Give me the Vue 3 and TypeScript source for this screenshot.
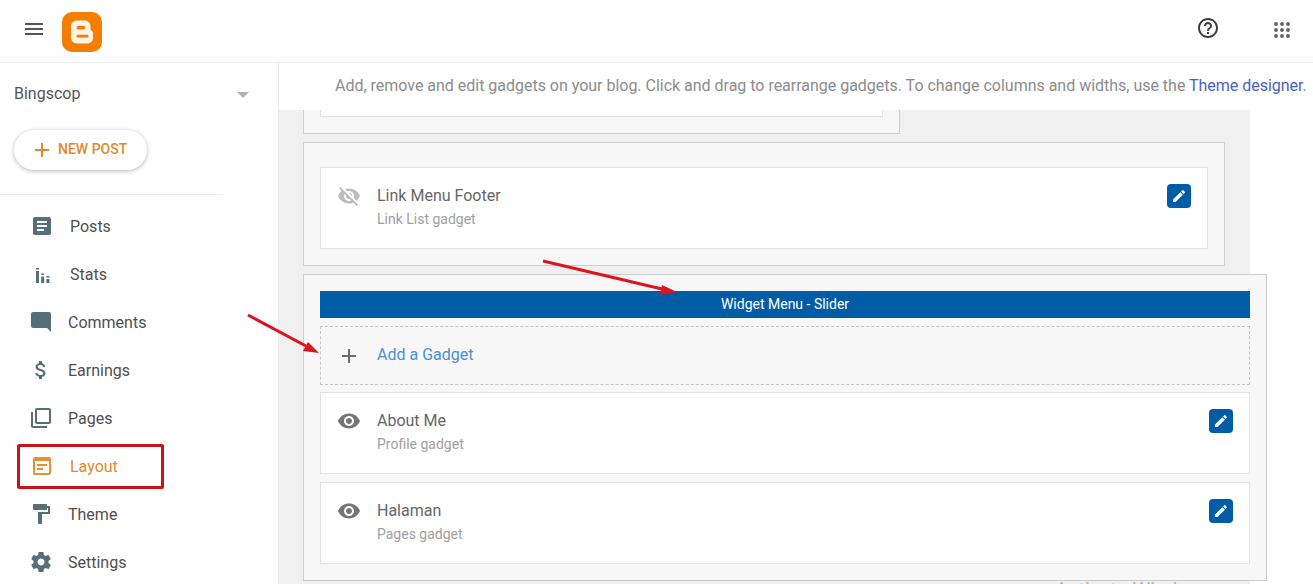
<script setup lang="ts">
interface NavItem {
  label: string
  icon: string
  alt?: boolean
  active?: boolean
}

const eye =
  'M12 4.5C7 4.5 2.73 7.61 1 12c1.73 4.39 6 7.5 11 7.5s9.27-3.11 11-7.5c-1.73-4.39-6-7.5-11-7.5zM12 17c-2.76 0-5-2.24-5-5s2.24-5 5-5 5 2.24 5 5-2.24 5-5 5zm0-8c-1.66 0-3 1.34-3 3s1.34 3 3 3 3-1.34 3-3-1.34-3-3-3z'
const eyeOff =
  'M12 7c2.76 0 5 2.24 5 5 0 .65-.13 1.26-.36 1.83l2.92 2.92c1.51-1.26 2.7-2.89 3.43-4.75-1.73-4.39-6-7.5-11-7.5-1.4 0-2.74.25-3.98.7l2.16 2.16C10.74 7.13 11.35 7 12 7zM2 4.27l2.28 2.28.46.46C3.08 8.3 1.78 10.02 1 12c1.73 4.39 6 7.5 11 7.5 1.55 0 3.03-.3 4.38-.84l.42.42L19.73 22 21 20.73 3.27 3 2 4.27zM7.53 9.8l1.55 1.55c-.05.21-.08.43-.08.65 0 1.66 1.34 3 3 3 .22 0 .44-.03.65-.08l1.55 1.55c-.67.33-1.41.53-2.2.53-2.76 0-5-2.24-5-5 0-.79.2-1.53.53-2.2zm4.31-.78l3.15 3.15.02-.16c0-1.66-1.34-3-3-3l-.17.01z'
const pencil =
  'M3 17.25V21h3.75L17.81 9.94l-3.75-3.75L3 17.25zM20.71 7.04c.39-.39.39-1.02 0-1.41l-2.34-2.34c-.39-.39-1.02-.39-1.41 0l-1.83 1.83 3.75 3.75 1.83-1.83z'

const navItems: NavItem[] = [
  {
    label: 'Posts',
    icon: 'M19 3H5c-1.1 0-2 .9-2 2v14c0 1.1.9 2 2 2h14c1.1 0 2-.9 2-2V5c0-1.1-.9-2-2-2zm-5 14H7v-2h7v2zm3-4H7v-2h10v2zm0-4H7V7h10v2z',
  },
  {
    label: 'Stats',
    icon: 'M6 6h3v1.6H6zM6 9h3v12H6zM11.2 11.5h3v1.5h-3zM11.2 14.4h3V21h-3zM16.4 14h3v1.5h-3zM16.4 17h3v4h-3z',
  },
  {
    label: 'Comments',
    alt: true,
    icon: 'M21.99 4c0-1.1-.89-2-1.99-2H4c-1.1 0-2 .9-2 2v12c0 1.1.9 2 2 2h14l4 4-.01-18z',
  },
  {
    label: 'Earnings',
    alt: true,
    icon: 'M11.8 10.9c-2.27-.59-3-1.2-3-2.15 0-1.09 1.01-1.85 2.7-1.85 1.78 0 2.44.85 2.5 2.1h2.21c-.07-1.72-1.12-3.3-3.21-3.81V3h-3v2.16c-1.94.42-3.5 1.68-3.5 3.61 0 2.31 1.91 3.46 4.7 4.13 2.5.6 3 1.48 3 2.41 0 .69-.49 1.79-2.7 1.79-2.06 0-2.87-.92-2.98-2.1h-2.2c.12 2.19 1.76 3.42 3.68 3.83V21h3v-2.15c1.95-.37 3.5-1.5 3.5-3.55 0-2.84-2.43-3.81-4.7-4.4z',
  },
  {
    label: 'Pages',
    alt: true,
    icon: 'M4 6H2v14c0 1.1.9 2 2 2h14v-2H4V6zm16-4H8c-1.1 0-2 .9-2 2v12c0 1.1.9 2 2 2h12c1.1 0 2-.9 2-2V4c0-1.1-.9-2-2-2zm0 14H8V4h12v12z',
  },
  {
    label: 'Layout',
    active: true,
    icon: 'M19 3H5c-1.1 0-2 .9-2 2v14c0 1.1.9 2 2 2h14c1.1 0 2-.9 2-2V5c0-1.1-.9-2-2-2zm0 16H5V7h14v12zM7 10h10v2H7zm0 4h6v2H7z',
  },
  {
    label: 'Theme',
    alt: true,
    icon: 'M18 4V3c0-.55-.45-1-1-1H5c-.55 0-1 .45-1 1v4c0 .55.45 1 1 1h12c.55 0 1-.45 1-1V6h1v4H9v11c0 .55.45 1 1 1h2c.55 0 1-.45 1-1v-9h8V4h-3z',
  },
  {
    label: 'Settings',
    alt: true,
    icon: 'M19.43 12.98c.04-.32.07-.64.07-.98s-.03-.66-.07-.98l2.11-1.65c.19-.15.24-.42.12-.64l-2-3.46c-.12-.22-.39-.3-.61-.22l-2.49 1c-.52-.4-1.08-.73-1.69-.98l-.38-2.65C14.46 2.18 14.25 2 14 2h-4c-.25 0-.46.18-.49.42l-.38 2.65c-.61.25-1.17.59-1.69.98l-2.49-1c-.23-.09-.49 0-.61.22l-2 3.46c-.13.22-.07.49.12.64l2.11 1.65c-.04.32-.07.65-.07.98s.03.66.07.98l-2.11 1.65c-.19.15-.24.42-.12.64l2 3.46c.12.22.39.3.61.22l2.49-1c.52.4 1.08.73 1.69.98l.38 2.65c.03.24.24.42.49.42h4c.25 0 .46-.18.49-.42l.38-2.65c.61-.25 1.17-.59 1.69-.98l2.49 1c.23.09.49 0 .61-.22l2-3.46c.12-.22.07-.49-.12-.64l-2.11-1.65zM12 15.5c-1.93 0-3.5-1.57-3.5-3.5s1.57-3.5 3.5-3.5 3.5 1.57 3.5 3.5-1.57 3.5-3.5 3.5z',
  },
]

const sliderGadgets = [
  { title: 'About Me', sub: 'Profile gadget' },
  { title: 'Halaman', sub: 'Pages gadget' },
]

const gridDots = [4, 12, 20].flatMap((cy) => [4, 12, 20].map((cx) => ({ cx, cy })))
</script>

<template>
  <div class="page">
    <header class="topbar">
      <div class="topbar-left">
        <svg class="menu" width="18" height="12" viewBox="0 0 18 12">
          <path d="M0 0h18v2H0zM0 5h18v2H0zM0 10h18v2H0z" />
        </svg>
        <svg class="logo" width="40" height="40" viewBox="0 0 40 40">
          <rect width="40" height="40" rx="10" fill="#f57d00" />
          <path
            d="M15 8.5h7.5c3.6 0 6 2.6 6 5.5v3c0 1.3 1 1.4 1.7 1.9.7.5.8 1.2.8 2V26c0 3.2-2.6 5.5-5.8 5.5H15c-3.3 0-6-2.5-6-5.7V14.2c0-3.2 2.7-5.7 6-5.7z"
            fill="#fff4e6"
          />
          <rect x="14.5" y="14" width="9" height="3.6" rx="1.8" fill="#f57d00" />
          <rect x="14.5" y="22.8" width="12" height="2.8" rx="1.4" fill="#f57d00" />
        </svg>
      </div>
      <div class="topbar-right">
        <svg class="help" width="24" height="24" viewBox="0 0 24 24">
          <path
            d="M11 18h2v-2h-2v2zm1-16C6.48 2 2 6.48 2 12s4.48 10 10 10 10-4.48 10-10S17.52 2 12 2zm0 18c-4.41 0-8-3.59-8-8s3.59-8 8-8 8 3.59 8 8-3.59 8-8 8zm0-14c-2.21 0-4 1.79-4 4h2c0-1.1.9-2 2-2s2 .9 2 2c0 2-3 1.75-3 5h2c0-2.25 3-2.5 3-5 0-2.21-1.79-4-4-4z"
          />
        </svg>
        <svg class="apps" width="18" height="18" viewBox="0 0 24 24">
          <circle v-for="d in gridDots" :key="`${d.cx}-${d.cy}`" :cx="d.cx" :cy="d.cy" r="2.6" />
        </svg>
      </div>
    </header>

    <div class="body">
      <aside class="sidebar">
        <div class="blog-picker">
          <span>Bingscop</span>
          <i class="caret"></i>
        </div>
        <button class="new-post">
          <svg width="14" height="14" viewBox="0 0 14 14"><path d="M6 0h2v6h6v2H8v6H6V8H0V6h6z" /></svg>
          <span>NEW POST</span>
        </button>
        <div class="divider"></div>
        <nav class="nav">
          <a
            v-for="item in navItems"
            :key="item.label"
            class="nav-item"
            :class="{ alt: item.alt, active: item.active }"
          >
            <svg width="24" height="24" viewBox="0 0 24 24"><path :d="item.icon" /></svg>
            <span>{{ item.label }}</span>
          </a>
        </nav>
      </aside>

      <main class="main">
        <div class="subhead">
          Add, remove and edit gadgets on your blog. Click and drag to rearrange gadgets. To change columns and widths, use the <a>Theme designer</a>.
        </div>

        <div class="content">
          <span class="watermark">Activate Windows</span>

          <section class="panel panel-cut">
            <div class="card card-cut"></div>
          </section>

          <section class="panel panel-footer">
            <div class="card">
              <svg class="vis off" width="24" height="24" viewBox="0 0 24 24"><path :d="eyeOff" /></svg>
              <div class="card-text">
                <div class="card-title">Link Menu Footer</div>
                <div class="card-sub">Link List gadget</div>
              </div>
              <button class="edit">
                <svg width="16" height="16" viewBox="0 0 24 24"><path :d="pencil" /></svg>
              </button>
            </div>
          </section>

          <section class="panel panel-slider">
            <div class="panel-head">Widget Menu - Slider</div>
            <div class="add-gadget">
              <svg width="24" height="24" viewBox="0 0 24 24"><path d="M19 13h-6v6h-2v-6H5v-2h6V5h2v6h6z" /></svg>
              <a>Add a Gadget</a>
            </div>
            <div v-for="g in sliderGadgets" :key="g.title" class="card">
              <svg class="vis" width="24" height="24" viewBox="0 0 24 24"><path :d="eye" /></svg>
              <div class="card-text">
                <div class="card-title">{{ g.title }}</div>
                <div class="card-sub">{{ g.sub }}</div>
              </div>
              <button class="edit">
                <svg width="16" height="16" viewBox="0 0 24 24"><path :d="pencil" /></svg>
              </button>
            </div>
          </section>
        </div>
      </main>
    </div>

    <!-- red marks drawn on top of the screenshot -->
    <div class="mark-box"></div>
    <svg class="marks" width="1313" height="584" viewBox="0 0 1313 584">
      <path d="M543 261L662 289" stroke="#dc1420" stroke-width="3" fill="none" />
      <path d="M677 292L660 295L662 285z" fill="#dc1420" />
      <path d="M248 315L306 346" stroke="#dc1420" stroke-width="3" fill="none" />
      <path d="M319 353L303 351L308 342z" fill="#dc1420" />
    </svg>
  </div>
</template>

<style scoped>
.page {
  position: relative;
  width: 1313px;
  height: 584px;
  overflow: hidden;
  background: #fff;
  font-family: Roboto, "Liberation Sans", sans-serif;
}

.topbar {
  box-sizing: border-box;
  height: 63px;
  border-bottom: 1px solid #eaeaea;
  display: flex;
  justify-content: space-between;
  align-items: center;
}

.topbar-left {
  display: flex;
  align-items: center;
  padding-left: 25px;
  gap: 19px;
}

.menu {
  fill: #555;
  margin-top: -4px;
}

.logo {
  margin-top: 1px;
}

.topbar-right {
  display: flex;
  align-items: center;
  gap: 53px;
  padding-right: 22px;
}

.help {
  fill: #3c3c3c;
  margin-top: -6px;
}

.apps {
  fill: #5f6368;
  margin-top: -2px;
}

.body {
  display: flex;
  height: 521px;
}

.sidebar {
  box-sizing: border-box;
  width: 279px;
  flex: none;
  border-right: 1px solid #eaeaea;
}

.blog-picker {
  height: 61px;
  padding: 0 29px 0 14px;
  display: flex;
  align-items: center;
  justify-content: space-between;
  font-size: 16px;
  color: #555;
}

.caret {
  width: 0;
  height: 0;
  border-left: 6px solid transparent;
  border-right: 6px solid transparent;
  border-top: 6px solid #b0b0b4;
  margin-top: 2px;
}

.new-post {
  display: flex;
  align-items: center;
  gap: 9px;
  box-sizing: border-box;
  width: 133px;
  height: 40px;
  margin: 6px 0 0 14px;
  padding: 0 0 0 21px;
  border: 0;
  border-radius: 20px;
  background: #fff;
  box-shadow: 0 1px 4px rgba(0, 0, 0, 0.3);
  color: #e08a2e;
  font-family: inherit;
  font-size: 14px;
  font-weight: 500;
}

.new-post span {
  margin-top: -2px;
}

.new-post svg {
  fill: #e08a2e;
}

.divider {
  width: 223px;
  height: 1px;
  margin-top: 24px;
  background: #ececec;
}

.nav {
  margin-top: 7px;
}

.nav-item {
  display: flex;
  align-items: center;
  gap: 16px;
  height: 48px;
  padding-left: 30px;
  font-size: 16px;
  color: #4f4f4f;
}

.nav-item svg {
  fill: #546e7a;
  flex: none;
}

.nav-item.alt {
  gap: 15px;
  padding-left: 29px;
}

.nav-item.active {
  color: #e08a2e;
}

.nav-item.active svg {
  fill: #e8912f;
}

.main {
  flex: 1;
  min-width: 0;
  overflow: hidden;
}

.subhead {
  height: 47px;
  line-height: 45px;
  padding-left: 56px;
  font-size: 16px;
  letter-spacing: -0.015px;
  color: #8c8c8c;
  white-space: nowrap;
}

.subhead a {
  color: #4a5fc1;
}

.content {
  position: relative;
  box-sizing: border-box;
  width: 971px;
  height: 474px;
  padding-left: 24px;
  background: #f0f0f0;
  display: flex;
  flex-direction: column;
  gap: 8px;
}

.watermark {
  position: absolute;
  left: 776px;
  top: 468px;
  font-size: 20px;
  color: #b5b5b5;
  white-space: nowrap;
}

.panel {
  position: relative;
  box-sizing: border-box;
  flex: none;
  background: #f7f7f7;
  border: 1px solid #cccccc;
  padding: 16px;
}

.panel-cut {
  width: 597px;
  border-top: 0;
  padding-top: 0;
}

.panel-footer {
  width: 922px;
  padding-top: 24px;
}

.panel-slider {
  width: 964px;
  display: flex;
  flex-direction: column;
  gap: 8px;
}

.panel-slider .add-gadget + .card {
  margin-top: -1px;
}

.card {
  box-sizing: border-box;
  height: 82px;
  background: #fff;
  border: 1px solid #e3e3e3;
  padding: 16px;
  display: flex;
  align-items: flex-start;
  gap: 16px;
}

.card-cut {
  height: 7px;
  border-top: 0;
  padding: 0;
}

.vis {
  fill: #757575;
  flex: none;
}

.vis.off {
  fill: #bdbdbd;
}

.card-text {
  flex: 1;
  padding-top: 2px;
}

.card-title {
  font-size: 16px;
  line-height: 20px;
  color: #666;
}

.card-sub {
  margin-top: 3px;
  font-size: 14px;
  line-height: 20px;
  color: #a0a0a0;
}

.edit {
  width: 24px;
  height: 24px;
  padding: 0;
  border: 0;
  border-radius: 4px;
  background: #005da5;
  display: flex;
  align-items: center;
  justify-content: center;
}

.edit svg {
  fill: #fff;
}

.panel-head {
  height: 27px;
  line-height: 27px;
  background: #005da5;
  color: #fff;
  font-size: 14px;
  font-weight: 400;
  text-align: center;
}

.add-gadget {
  box-sizing: border-box;
  height: 59px;
  border: 1px dashed #c4c4c4;
  padding-left: 16px;
  display: flex;
  align-items: center;
  gap: 16px;
  font-size: 16px;
  color: #4a90d0;
}

.add-gadget a {
  margin-top: -2px;
}

.add-gadget svg {
  fill: #6b6b6b;
}

.mark-box {
  position: absolute;
  left: 17px;
  top: 444px;
  width: 147px;
  height: 45px;
  box-sizing: border-box;
  border: 3px solid #cc1219;
  border-radius: 2px;
}

.marks {
  position: absolute;
  left: 0;
  top: 0;
  pointer-events: none;
}
</style>

<style>
html,
body {
  margin: 0;
  overflow: hidden;
}
</style>
